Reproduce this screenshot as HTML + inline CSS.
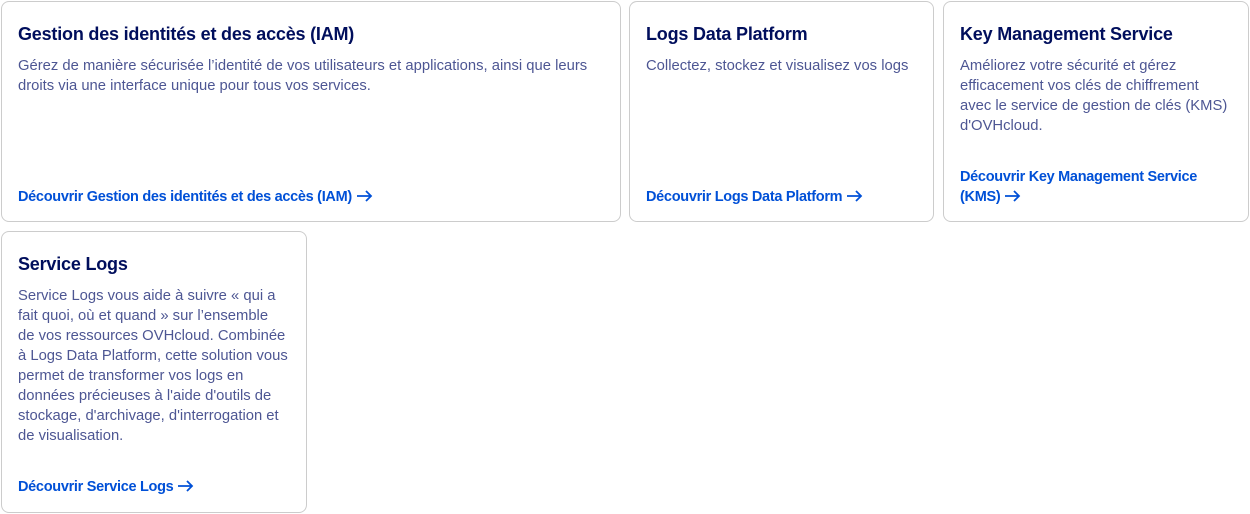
<!DOCTYPE html>
<html><head><meta charset="utf-8"><style>
body{margin:0;width:1250px;height:514px;background:#fff;position:relative;font-family:"Liberation Sans",sans-serif;overflow:hidden}
.c{position:absolute;border:1px solid #ccc;border-radius:8px;box-sizing:border-box}
.t{position:absolute;left:16px;font-weight:bold;font-size:18px;color:#000e5c;white-space:nowrap;letter-spacing:-0.2px;line-height:20px}
.b{position:absolute;left:16px;font-size:14.8px;color:#4d5693;line-height:20px;white-space:nowrap}
.l{position:absolute;left:16px;font-size:14.5px;font-weight:bold;color:#0050d7;line-height:20px;white-space:nowrap;letter-spacing:-0.3px}
.a{display:inline-block;width:17px;height:12px;margin-left:4px;vertical-align:-1px}
</style></head><body>
<svg width="0" height="0" style="position:absolute"><defs><symbol id="ar" viewBox="0 0 17 12"><path d="M1 6H15M10 1L15 6L10 11" fill="none" stroke="#0050d7" stroke-width="1.8"/></symbol></defs></svg>
<div class="c" style="left:1px;top:1px;width:620px;height:221px">
<div class="t" style="top:22px">Gestion des identités et des accès (IAM)</div>
<div class="b" style="top:54px">Gérez de manière sécurisée l’identité de vos utilisateurs et applications, ainsi que leurs<br>droits via une interface unique pour tous vos services.</div>
<div class="l" style="top:185px">Découvrir Gestion des identités et des accès (IAM)<svg class="a"><use href="#ar"/></svg></div>
</div>
<div class="c" style="left:629px;top:1px;width:305px;height:221px">
<div class="t" style="top:22px">Logs Data Platform</div>
<div class="b" style="top:54px">Collectez, stockez et visualisez vos logs</div>
<div class="l" style="top:185px">Découvrir Logs Data Platform<svg class="a"><use href="#ar"/></svg></div>
</div>
<div class="c" style="left:943px;top:1px;width:306px;height:221px">
<div class="t" style="top:22px">Key Management Service</div>
<div class="b" style="top:54px">Améliorez votre sécurité et gérez<br>efficacement vos clés de chiffrement<br>avec le service de gestion de clés (KMS)<br>d'OVHcloud.</div>
<div class="l" style="top:165px">Découvrir Key Management Service<br>(KMS)<svg class="a"><use href="#ar"/></svg></div>
</div>
<div class="c" style="left:1px;top:231px;width:306px;height:282px">
<div class="t" style="top:22px">Service Logs</div>
<div class="b" style="top:54px">Service Logs vous aide à suivre « qui a<br>fait quoi, où et quand » sur l’ensemble<br>de vos ressources OVHcloud. Combinée<br>à Logs Data Platform, cette solution vous<br>permet de transformer vos logs en<br>données précieuses à l'aide d'outils de<br>stockage, d'archivage, d'interrogation et<br>de visualisation.</div>
<div class="l" style="top:245px">Découvrir Service Logs<svg class="a"><use href="#ar"/></svg></div>
</div>
</body></html>
